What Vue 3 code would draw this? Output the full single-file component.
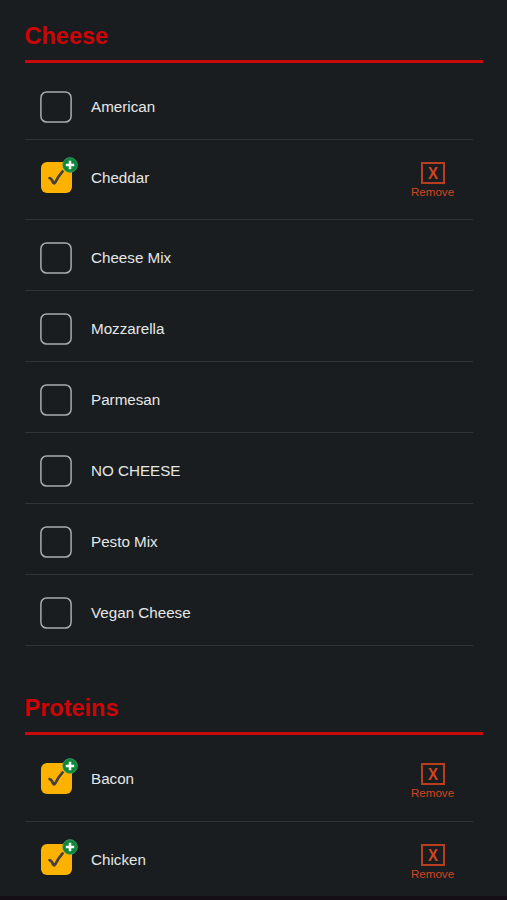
<script setup>
import { reactive } from 'vue'

const sections = reactive([
  {
    title: 'Cheese',
    items: [
      { name: 'American', selected: false },
      { name: 'Cheddar', selected: true },
      { name: 'Cheese Mix', selected: false },
      { name: 'Mozzarella', selected: false },
      { name: 'Parmesan', selected: false },
      { name: 'NO CHEESE', selected: false },
      { name: 'Pesto Mix', selected: false },
      { name: 'Vegan Cheese', selected: false },
    ],
  },
  {
    title: 'Proteins',
    items: [
      { name: 'Bacon', selected: true },
      { name: 'Chicken', selected: true },
    ],
  },
])
</script>

<template>
  <main class="page">
    <section v-for="section in sections" :key="section.title" class="section">
      <h2 class="title">{{ section.title }}</h2>
      <ul class="list">
        <li
          v-for="item in section.items"
          :key="item.name"
          class="row"
          :class="{ selected: item.selected }"
          @click="item.selected = true"
        >
          <span class="box">
            <svg v-if="item.selected" class="check" viewBox="0 0 31 31">
              <path d="M8.6 16.2 Q10.4 16.4 12.2 20.6 Q13.1 22.2 14.2 20.4 Q17 14.6 21.6 9.4" />
            </svg>
            <svg v-else class="outline" viewBox="0 0 32 32">
              <rect x="0.9" y="0.9" width="30.2" height="30.2" rx="5.8" />
            </svg>
            <svg v-if="item.selected" class="badge" viewBox="0 0 16 16">
              <circle cx="8" cy="8" r="7.4" />
              <path d="M8 3.8V12.2M3.8 8H12.2" />
            </svg>
          </span>
          <span class="name">{{ item.name }}</span>
          <button v-if="item.selected" class="remove" @click.stop="item.selected = false">
            <span class="x"><span class="letter">X</span></span>
            <span class="caption">Remove</span>
          </button>
        </li>
      </ul>
    </section>
  </main>
</template>

<style>
body {
  margin: 0;
  background: #191d1f;
  overflow: hidden;
}
</style>

<style scoped>
.page {
  box-sizing: border-box;
  height: 900px;
  overflow: hidden;
  padding: 19px 24px 0 24.5px;
  background: #191d1f;
  border-bottom: 4px solid #150e17;
  font-family: "Liberation Sans", Arial, sans-serif;
}
.section {
  margin-bottom: 45.7px;
}
.title {
  box-sizing: border-box;
  height: 44px;
  margin: 0 0 6.3px;
  border-bottom: 3px solid #c90b0e;
  color: #cb0508;
  font-size: 23.5px;
  font-weight: 700;
  line-height: 35px;
}
.list {
  list-style: none;
  margin: 0 10.5px 0 0;
  padding: 0;
}
.row {
  box-sizing: border-box;
  height: 70.85px;
  padding: 22px 17px 0 16.5px;
  border-bottom: 1px solid #303436;
  display: flex;
  align-items: flex-start;
}
.row.selected {
  height: 80.3px;
}
.box {
  position: relative;
  width: 31px;
  height: 31px;
  border-radius: 6px;
  flex: none;
}
.selected .box {
  background: #fdb202;
}
.outline {
  display: block;
  width: 32px;
  height: 32px;
  margin-left: -1px;
  fill: none;
  stroke: #a9acad;
  stroke-width: 1.5;
}
.check {
  display: block;
  width: 31px;
  height: 31px;
  fill: none;
  stroke: #47403a;
  stroke-width: 2.7;
  stroke-linecap: round;
  stroke-linejoin: round;
}
.badge {
  position: absolute;
  top: -5px;
  right: -6px;
  width: 16px;
  height: 16px;
  fill: #0b873b;
  stroke: #fff;
  stroke-width: 2.5;
}
.badge circle {
  stroke: #5fa578;
  stroke-width: 0.6;
}
.name {
  margin-left: 19px;
  color: #e6e7e7;
  font-size: 15.2px;
  line-height: 31px;
}
.remove {
  width: 46px;
  margin-left: auto;
  padding: 0;
  border: 0;
  background: none;
  color: #d24521;
  font-family: inherit;
  display: flex;
  flex-direction: column;
  align-items: center;
}
.x {
  box-sizing: border-box;
  width: 24px;
  height: 22px;
  border: 2px solid #b93e20;
  font-size: 17px;
  font-weight: 700;
  line-height: 20px;
  text-align: center;
}
.letter {
  display: block;
  transform: scaleX(0.88);
}
.caption {
  font-size: 11.6px;
  line-height: 16px;
}
</style>
